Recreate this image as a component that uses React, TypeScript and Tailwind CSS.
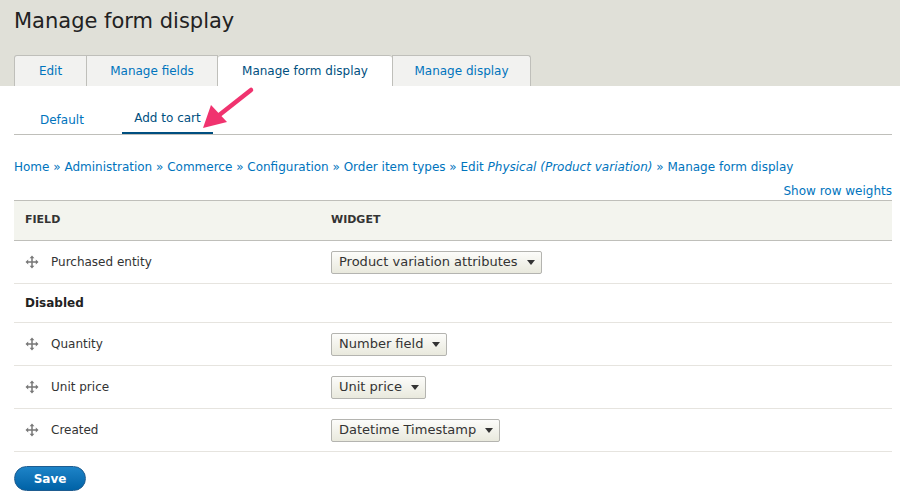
import React from 'react'

const font = { fontFamily: '"DejaVu Sans", "Liberation Sans", sans-serif' }

function DragIcon() {
  return (
    <svg width="14" height="14" viewBox="0 0 14 14" className="shrink-0">
      <path d="M7 2v10M2 7h10" stroke="#777" strokeWidth="1.5" />
      <path d="M7 0.5l2.4 2.7H4.6z M7 13.5l2.4-2.7H4.6z M0.5 7l2.7-2.4v4.8z M13.5 7l-2.7-2.4v4.8z" fill="#777" />
    </svg>
  )
}

function Select({ label }: { label: string }) {
  return (
    <div className="inline-flex h-[23px] items-center gap-[9px] rounded-[2px] border border-[#b4b4b0] bg-gradient-to-b from-[#fcfcfa] to-[#e9e9dd] pl-[7px] pr-[6px] text-[13px] text-[#333]">
      <span>{label}</span>
      <svg width="8" height="5" viewBox="0 0 8 5"><path d="M0 0h8L4 5z" fill="#333" /></svg>
    </div>
  )
}

const rows = [
  { name: 'Quantity', widget: 'Number field' },
  { name: 'Unit price', widget: 'Unit price' },
  { name: 'Created', widget: 'Datetime Timestamp' },
]

export default function App() {
  return (
    <div className="relative min-h-[503px] bg-white" style={font}>
      <div className="bg-[#e0e0d8] px-[14px] pt-[7px]">
        <h1 className="text-[21px] leading-[28px] text-[#222]">Manage form display</h1>
        <div className="mt-[20px] flex h-[31px] text-[12px]">
          <div className="flex w-[73px] items-center justify-center rounded-tl-[3px] border border-b-0 border-[#bfbfba] bg-[#f2f2f0] text-[#0074bd]">Edit</div>
          <div className="flex w-[131px] items-center justify-center border-t border-r border-[#bfbfba] bg-[#f2f2f0] text-[#0074bd]">Manage fields</div>
          <div className="flex w-[174px] items-center justify-center rounded-t-[3px] border-t border-[#bfbfba] bg-white text-[#004f80]">Manage form display</div>
          <div className="flex w-[139px] items-center justify-center rounded-tr-[3px] border-t border-x border-[#bfbfba] bg-[#f2f2f0] text-[#0074bd]">Manage display</div>
        </div>
      </div>

      <div className="pl-[14px] pr-[8px]">
        <div className="mt-[19px] flex h-[30px] border-b border-[#bfbfba] text-[12px]">
          <div className="flex w-[108px] items-center pl-[26px] text-[#0074bd]">Default</div>
          <div className="flex w-[91px] items-center justify-center border-b-2 border-[#004f80] pb-[1px] text-[#004f80]">Add to cart</div>
        </div>

        <div className="mt-[23px] text-[12px] leading-[18px] text-[#0074bd]">
          Home » Administration » Commerce » Configuration » Order item types » Edit <em>Physical (Product variation)</em> » Manage form display
        </div>
        <div className="mt-[6px] text-right text-[12px] leading-[18px] text-[#0074bd]">Show row weights</div>

        <table className="w-full border-collapse text-[12px] text-[#333]">
          <thead>
            <tr className="h-[40px] border-y border-[#bfbfba] bg-[#f3f4ee] text-left text-[11px] font-bold text-[#333]">
              <th className="w-[306px] pl-[11px] font-bold">FIELD</th>
              <th className="pl-[11px] font-bold">WIDGET</th>
            </tr>
          </thead>
          <tbody>
            <tr className="h-[43px] border-b border-[#e6e4df]">
              <td className="pl-[11px]">
                <div className="flex items-center gap-[12px]"><DragIcon />Purchased entity</div>
              </td>
              <td className="pl-[11px]"><Select label="Product variation attributes" /></td>
            </tr>
            <tr className="h-[39px] border-b border-[#e6e4df]">
              <td className="pl-[11px] font-bold text-[#222]" colSpan={2}>Disabled</td>
            </tr>
            {rows.map((r) => (
              <tr key={r.name} className="h-[43px] border-b border-[#e6e4df]">
                <td className="pl-[11px]">
                  <div className="flex items-center gap-[12px]"><DragIcon />{r.name}</div>
                </td>
                <td className="pl-[11px]"><Select label={r.widget} /></td>
              </tr>
            ))}
          </tbody>
        </table>

        <button className="mt-[14px] h-[25px] w-[72px] rounded-full border border-[#1e5c90] bg-gradient-to-b from-[#1d84c8] to-[#0062a6] text-[12px] font-bold text-white">
          Save
        </button>
      </div>

      <svg className="pointer-events-none absolute left-[198px] top-[86px]" width="60" height="48" viewBox="0 0 60 48">
        <path d="M53 4L20 30" stroke="#f0336f" strokeWidth="4.5" strokeLinecap="round" />
        <path d="M5 42L13 19L29 36z" fill="#f0336f" />
      </svg>
    </div>
  )
}
